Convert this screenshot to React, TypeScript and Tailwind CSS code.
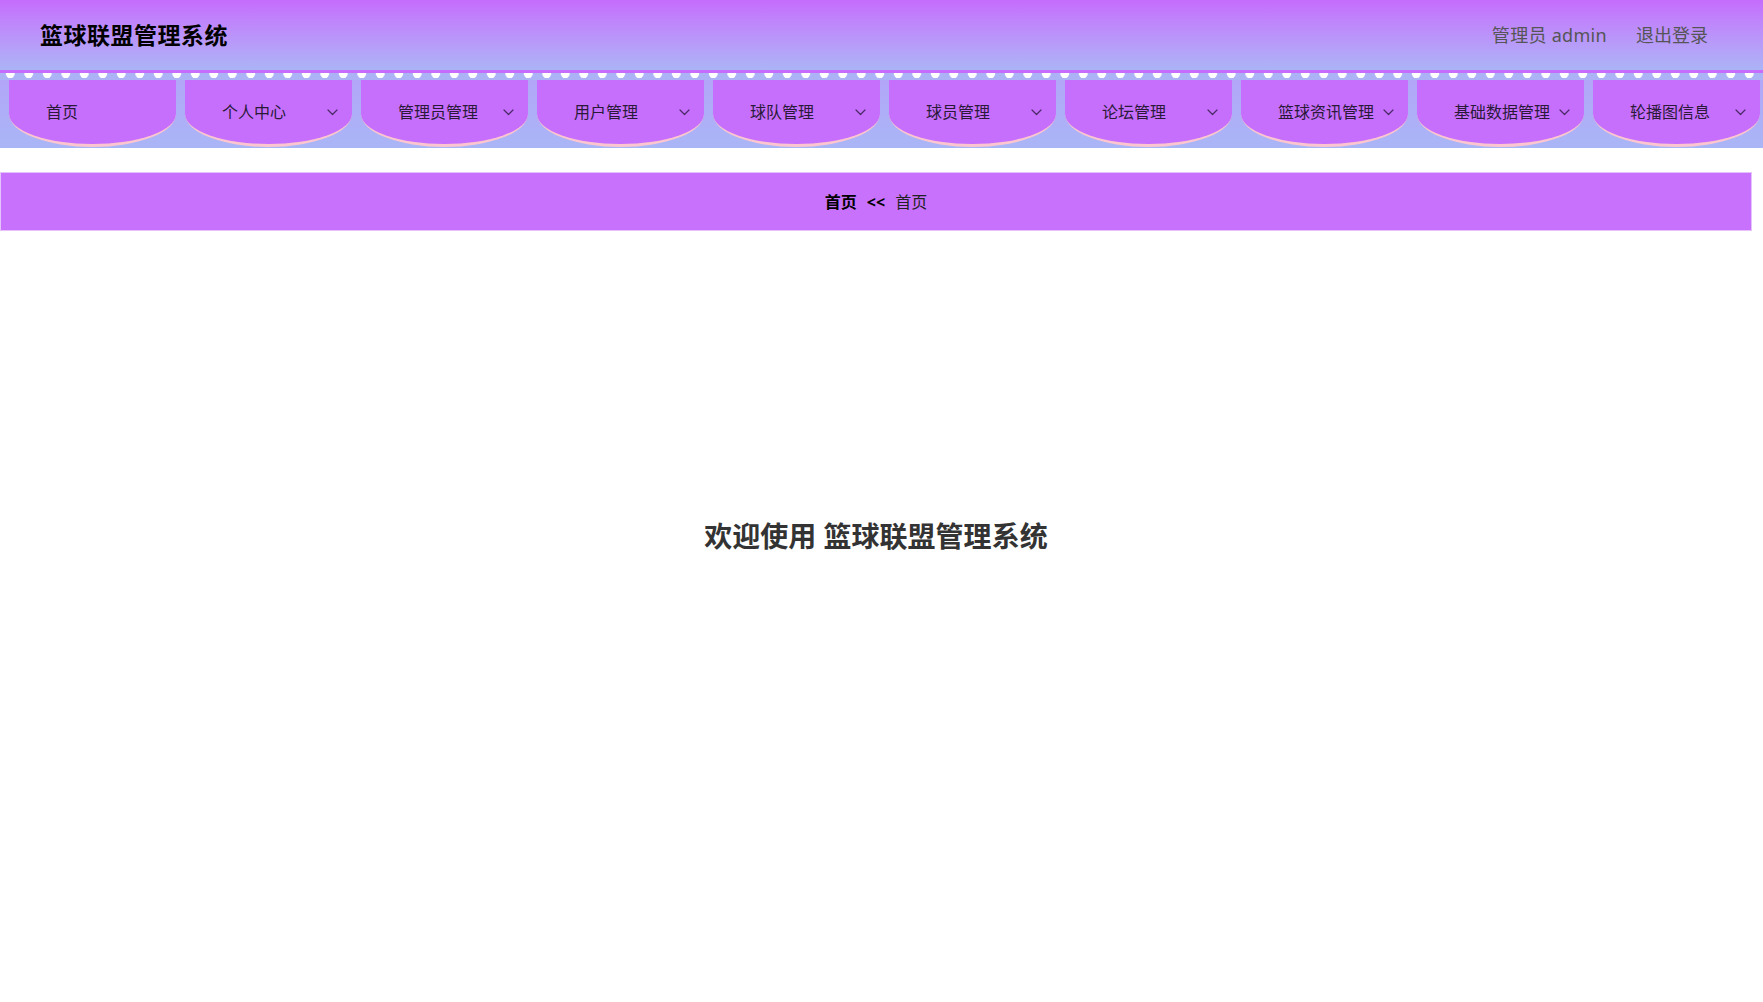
import React from "react";

const menus = [
  { name: "首页", sub: false },
  { name: "个人中心", sub: true },
  { name: "管理员管理", sub: true },
  { name: "用户管理", sub: true },
  { name: "球队管理", sub: true },
  { name: "球员管理", sub: true },
  { name: "论坛管理", sub: true },
  { name: "篮球资讯管理", sub: true },
  { name: "基础数据管理", sub: true },
  { name: "轮播图信息", sub: true },
];

const Chevron = () => (
  <svg width="11" height="7" viewBox="0 0 11 7" fill="none" className="shrink-0">
    <polyline points="1,1 5.5,5.5 10,1" stroke="#4a2a66" strokeWidth="1.2" strokeLinecap="round" strokeLinejoin="round" />
  </svg>
);

export default function App() {
  return (
    <div className="min-h-screen bg-white font-['Noto_Sans','Noto_Sans_CJK_SC',sans-serif]">
      {/* Header */}
      <header className="h-[70px] flex items-center justify-between pl-[40px] pr-[55px] bg-gradient-to-b from-[#c56cfd] to-[#abb4f6]">
        <div className="text-[23px] font-bold text-black tracking-[0.5px]">篮球联盟管理系统</div>
        <div className="flex items-center gap-[29px] text-[18px] text-[#555]">
          <span className="tracking-[0.3px]">管理员 admin</span>
          <span className="cursor-pointer">退出登录</span>
        </div>
      </header>

      {/* Menu */}
      <nav className="h-[78px] border-t-[3px] border-[#c56cfd] bg-gradient-to-b from-[#b3a4f9] to-[#a9b6f6]">
        <div className="h-[7px] bg-[#abb3f6] bg-[radial-gradient(ellipse_4.6px_5.5px_at_50%_0,#ffffff_92%,transparent_100%)] bg-[length:18.5px_7px] bg-[position:1px_0]" />
        <div className="flex gap-[9px] pl-[9px] overflow-hidden">
          {menus.map((m) => (
            <div
              key={m.name}
              className="w-[167px] h-[67px] shrink-0 flex items-center pl-[37px] pr-[14px] bg-[#c76ffd] border-b-[3px] border-[#fbc6cf] rounded-bl-[50%_33px] rounded-br-[50%_33px] text-[16px] text-[#2a1a38] cursor-pointer"
            >
              <span className="flex-1 whitespace-nowrap">{m.name}</span>
              {m.sub && <Chevron />}
            </div>
          ))}
        </div>
      </nav>

      {/* Breadcrumb */}
      <div className="mt-[24px] w-[1752px] h-[59px] flex items-center justify-center gap-[10px] bg-[#c871fc] border border-[#e6c2fc] text-[16px] text-[#222]">
        <span className="font-bold text-black">首页</span>
        <span className="font-bold text-black">&lt;&lt;</span>
        <span>首页</span>
      </div>

      {/* Welcome */}
      <div className="w-[1752px] pt-[284px] flex justify-center">
        <h1 className="text-[28px] font-bold text-[#333]">欢迎使用 篮球联盟管理系统</h1>
      </div>
    </div>
  );
}
